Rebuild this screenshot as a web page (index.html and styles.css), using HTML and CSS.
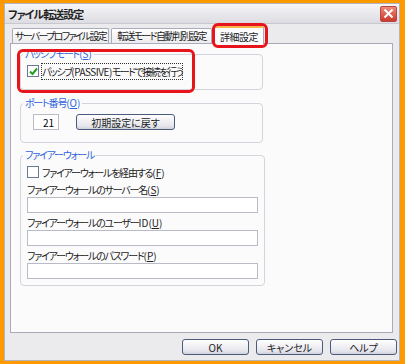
FILE: index.html
```html
<!DOCTYPE html>
<html lang="ja">

<head>
    <meta charset="UTF-8">
    <meta name="viewport" content="width=device-width, initial-scale=1.0">
    <title>ファイル転送設定</title>
    <link rel="stylesheet" href="styles.css">
</head>

<body>
    <div class="window">
        <div class="title-bar">
            <span class="title">ファイル転送設定</span>
            <button class="btn-close" aria-label="close">
                <svg width="11" height="11" viewBox="0 0 11 11">
                    <path d="M1.5 1.5 L9.5 9.5 M9.5 1.5 L1.5 9.5" stroke="#fff" stroke-width="2" />
                </svg>
            </button>
        </div>

        <div class="dialog-body">
            <div class="tab-header">
                <div class="tab tab-profile">サーバープロファイル設定</div>
                <div class="tab tab-mode">転送モード自動判別設定</div>
                <div class="tab tab-detail active">詳細設定</div>
            </div>

            <div class="tab-panel">
                <fieldset class="group group-passive">
                    <legend>パッシブモード<span class="key">(<u>S</u>)</span></legend>
                    <label class="check-row">
                        <span class="checkbox checked">
                            <svg width="9" height="9" viewBox="0 0 9 9">
                                <path d="M1 4.5 L3.5 7 L8 1.5" fill="none" stroke="#21a121" stroke-width="2" />
                            </svg>
                        </span>
                        <span class="focus-text">パッシブ<span class="key">(PASSIVE)</span>モードで接続を行う</span>
                    </label>
                </fieldset>

                <fieldset class="group group-port">
                    <legend>ポート番号<span class="key">(<u>O</u>)</span></legend>
                    <div class="port-row">
                        <input class="field port-input" type="text" value="21">
                        <button class="btn btn-reset">初期設定に戻す</button>
                    </div>
                </fieldset>

                <fieldset class="group group-firewall">
                    <legend>ファイアーウォール</legend>
                    <label class="check-row">
                        <span class="checkbox"></span>
                        <span>ファイアーウォールを経由する<span class="key">(<u>F</u>)</span></span>
                    </label>
                    <div class="field-label">ファイアーウォールのサーバー名<span class="key">(<u>S</u>)</span></div>
                    <input class="field wide" type="text">
                    <div class="field-label">ファイアーウォールのユーザー<span class="key">ID(<u>U</u>)</span></div>
                    <input class="field wide" type="text">
                    <div class="field-label">ファイアーウォールのパスワード<span class="key">(<u>P</u>)</span></div>
                    <input class="field wide" type="password">
                </fieldset>
            </div>

            <div class="footer">
                <button class="btn btn-footer">OK</button>
                <button class="btn btn-footer">キャンセル</button>
                <button class="btn btn-footer">ヘルプ</button>
            </div>
        </div>

        <!-- red callouts drawn over the dialog -->
        <div class="mark mark-tab"></div>
        <div class="mark mark-passive"></div>
    </div>
</body>

</html>
```

FILE: styles.css
```css
* {
    box-sizing: border-box;
}

body {
    margin: 0;
    background-color: #ff9900;
    font-family: "Noto Sans CJK JP", "DejaVu Sans", sans-serif;
    font-size: 10px;
    font-feature-settings: "palt";
    letter-spacing: -1.2px;
    color: #222;
}

.key {
    letter-spacing: 0;
}

.window {
    position: relative;
    margin: 3px 0 0 4px;
    width: 396px;
    height: 358px;
    background-color: #ebebee;
    border: 1px solid #b4b4bc;
}

.title-bar {
    display: flex;
    align-items: center;
    justify-content: space-between;
    height: 20px;
    padding: 0 2px 0 3px;
    background: linear-gradient(#f6f6f8, #dcdce2);
    border-bottom: 1px solid #c8c8d0;
}

.title {
    font-weight: bold;
    font-size: 11px;
    letter-spacing: -1px;
}

.btn-close {
    display: flex;
    align-items: center;
    justify-content: center;
    width: 17px;
    height: 16px;
    padding: 0;
    border: 1px solid #b44;
    border-radius: 2px;
    background: linear-gradient(#ee8a7a, #c9392a);
}

.dialog-body {
    padding: 2px 2px 0 5px;
}

.tab-header {
    display: flex;
    align-items: flex-end;
    height: 17px;
    padding-left: 2px;
}

.tab {
    height: 15px;
    margin-right: 2px;
    padding: 0 2px;
    line-height: 14px;
    text-align: center;
    background: linear-gradient(#fff, #ececf0);
    border: 1px solid #a8acb8;
    border-bottom: none;
    border-radius: 2px 2px 0 0;
    white-space: nowrap;
    letter-spacing: -1.7px;
}

.tab-profile {
    width: 97px;
}

.tab-mode {
    width: 101px;
}

.tab.active {
    position: relative;
    width: 50px;
    height: 18px;
    margin-bottom: -1px;
    padding: 2px 0 0;
    letter-spacing: -0.5px;
    background: #fcfcfe;
    border-top: 2px solid #f5b64a;
}

.tab-panel {
    width: 383px;
    height: 290px;
    padding: 4px 9px 0;
    background-color: #fbfbfc;
    border: 1px solid #a8acb8;
}

.group {
    width: 243px;
    margin: 0;
    padding: 0 6px 6px 6px;
    border: 1px solid #d4d4dc;
    border-radius: 4px;
}

.group legend {
    margin-left: -4px;
    padding: 0 2px;
    color: #2f64dc;
    line-height: 12px;
}

.group-passive {
    padding-bottom: 10px;
}

.group-port {
    margin-top: 7px;
}

.group-firewall {
    margin-top: 6px;
    padding-bottom: 6px;
}

.check-row {
    display: flex;
    align-items: center;
    gap: 3px;
    height: 16px;
    margin-top: 3px;
}

.checkbox {
    display: flex;
    align-items: center;
    justify-content: center;
    width: 12px;
    height: 12px;
    background: #fff;
    border: 1px solid #6a7a94;
}

.focus-text {
    outline: 1px dotted #333;
    letter-spacing: -1.5px;
}

.focus-text .key {
    letter-spacing: -0.5px;
}

.port-row {
    display: flex;
    align-items: center;
    gap: 17px;
    margin: 5px 0 6px 6px;
}

.field {
    height: 16px;
    padding: 0 4px;
    background: #fff;
    border: 1px solid #b9bcc6;
    font: inherit;
}

.port-input {
    width: 26px;
    text-align: right;
    letter-spacing: 0;
}

.field.wide {
    display: block;
    width: 231px;
}

.field-label {
    margin-top: 3px;
    line-height: 14px;
}

.btn {
    height: 16px;
    padding: 0;
    font: inherit;
    color: #222;
    background: linear-gradient(#ffffff, #e4e4ec 80%, #cfd0da);
    border: 1px solid #4c5a7c;
    border-radius: 3px;
}

.btn-reset {
    width: 99px;
}

.footer {
    display: flex;
    justify-content: flex-end;
    gap: 7px;
    padding: 6px 0 0;
}

.btn-footer {
    width: 67px;
    letter-spacing: 0;
}

.mark {
    position: absolute;
    border: 3px solid #e8141c;
    border-radius: 6px;
}

.mark-tab {
    left: 207px;
    top: 19px;
    width: 56px;
    height: 25px;
}

.mark-passive {
    left: 12px;
    top: 45px;
    width: 178px;
    height: 44px;
}
```
